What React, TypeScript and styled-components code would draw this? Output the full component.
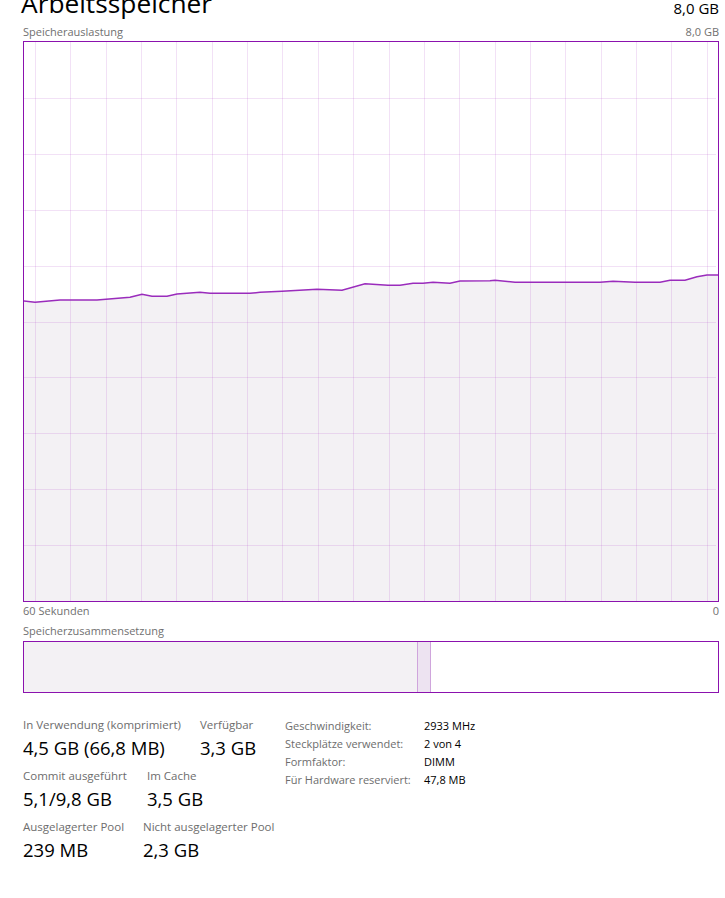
import React from "react";
import styled, { createGlobalStyle } from "styled-components";

const Global = createGlobalStyle`
  html, body { margin: 0; padding: 0; background: #ffffff; }
  body { font-family: "Open Sans", "Noto Sans", sans-serif; overflow: hidden; }
`;

const Page = styled.div`
  width: 725px;
  height: 898px;
  box-sizing: border-box;
  padding: 0 6px 0 23px;
  display: flex;
  flex-direction: column;
  overflow: hidden;
  color: #000;
`;

const HeaderRow = styled.div`
  height: 22px;
  display: flex;
  justify-content: space-between;
  align-items: flex-start;
  overflow: visible;
`;

const Title = styled.div`
  font-size: 26.3px;
  line-height: 26px;
  margin-top: -10px;
  margin-left: -2px;
  height: 32px;
`;

const HeaderValue = styled.div`
  font-size: 15px;
  line-height: 17px;
  margin-top: 0;
`;

const LabelRow = styled.div<{ $h: number }>`
  height: ${(p) => p.$h}px;
  display: flex;
  justify-content: space-between;
  align-items: center;
  font-size: 11px;
  color: #707070;
`;

const ChartBox = styled.div`
  width: 696px;
  height: 561px;
  box-sizing: border-box;
  border: 1px solid #8b12ae;
  background: #ffffff;
`;

const ChartSvg = styled.svg`
  display: block;
  width: 694px;
  height: 559px;
`;

const CompBar = styled.div`
  width: 696px;
  height: 52px;
  box-sizing: border-box;
  border: 1px solid #8b12ae;
  display: flex;
`;

const Segment = styled.div<{ $w?: number; $bg: string; $edge?: boolean }>`
  ${(p) => (p.$w !== undefined ? `width: ${p.$w}px; flex: none;` : "flex: 1;")}
  background: ${(p) => p.$bg};
  box-sizing: border-box;
  ${(p) => (p.$edge ? "border-left: 1px solid #cfa5dc; border-right: 1px solid #cfa5dc;" : "")}
`;

const Stats = styled.div`
  margin-top: 23px;
  display: flex;
`;

const LeftStats = styled.div`
  width: 262px;
  display: flex;
  flex-direction: column;
  gap: 5px;
  padding-top: 1px;
`;

const StatRow = styled.div`
  display: flex;
`;

const Stat = styled.div<{ $w: number }>`
  width: ${(p) => p.$w}px;
  flex: none;
  display: flex;
  flex-direction: column;
`;

const StatLabel = styled.div`
  font-size: 11.5px;
  line-height: 16px;
  color: #6d6d6d;
  white-space: nowrap;
`;

const StatValue = styled.div`
  font-size: 18.5px;
  line-height: 30px;
  color: #000;
  white-space: nowrap;
`;

const InfoTable = styled.div`
  display: grid;
  grid-template-columns: 139px auto;
  grid-auto-rows: 18px;
  align-items: center;
  font-size: 11px;
`;

const InfoLabel = styled.div`
  color: #6d6d6d;
  white-space: nowrap;
`;

const InfoValue = styled.div`
  color: #000;
  white-space: nowrap;
`;

const W = 694;
const H = 559;
const OX = 24;
const OY = 42;

const pts: [number, number][] = [
  [23, 301], [35, 302.3], [60, 300], [97, 300], [130, 297.3], [142, 294.3],
  [152, 296.3], [167, 296.3], [177, 294], [200, 292.3], [210, 293.3], [250, 293.3],
  [260, 292.3], [282, 291.3], [317, 289.3], [342, 290.3], [365, 283.7], [388, 285.3],
  [400, 285.3], [413, 283.3], [423, 283.3], [433, 282.3], [450, 283.3], [460, 281],
  [490, 280.7], [495, 280.3], [515, 282.3], [600, 282.3], [613, 281.3], [635, 282.3],
  [660, 282.3], [670, 280.3], [685, 280.3], [697, 276.7], [707, 275], [719, 275],
];

const Chart: React.FC = () => {
  const local = pts.map(([x, y]) => [x - OX, y - OY] as [number, number]);
  const line = local.map(([x, y]) => `${x.toFixed(1)},${y.toFixed(1)}`).join(" ");
  const area = `${line} ${W},${H} 0,${H}`;
  const vx = Array.from({ length: 20 }, (_, i) => Math.round(35 + i * 35.35) - OX + 0.5);
  const hy = Array.from({ length: 9 }, (_, i) => Math.round(OY + (i + 1) * 55.9) - OY + 0.5);
  return (
    <ChartSvg viewBox={`0 0 ${W} ${H}`}>
      <polygon points={area} fill="#f3f1f4" />
      <g stroke="rgba(175, 80, 200, 0.17)" strokeWidth={1} shapeRendering="crispEdges">
        {vx.map((x) => (
          <line key={`v${x}`} x1={x} y1={0} x2={x} y2={H} />
        ))}
        {hy.map((y) => (
          <line key={`h${y}`} x1={0} y1={y} x2={W - 2} y2={y} />
        ))}
      </g>
      <polyline points={line} fill="none" stroke="#9a2cbc" strokeWidth={1.5} />
    </ChartSvg>
  );
};

const App: React.FC = () => (
  <>
    <Global />
    <Page>
      <HeaderRow>
        <Title>Arbeitsspeicher</Title>
        <HeaderValue>8,0 GB</HeaderValue>
      </HeaderRow>
      <LabelRow $h={19}>
        <span>Speicherauslastung</span>
        <span>8,0 GB</span>
      </LabelRow>
      <ChartBox>
        <Chart />
      </ChartBox>
      <LabelRow $h={17}>
        <span>60 Sekunden</span>
        <span>0</span>
      </LabelRow>
      <LabelRow $h={22}>
        <span>Speicherzusammensetzung</span>
      </LabelRow>
      <CompBar>
        <Segment $w={393} $bg="#f3f1f4" />
        <Segment $w={14} $bg="#ede3f1" $edge />
        <Segment $bg="#ffffff" />
      </CompBar>
      <Stats>
        <LeftStats>
          <StatRow>
            <Stat $w={177}>
              <StatLabel>In Verwendung (komprimiert)</StatLabel>
              <StatValue>4,5 GB (66,8 MB)</StatValue>
            </Stat>
            <Stat $w={80}>
              <StatLabel>Verfügbar</StatLabel>
              <StatValue>3,3 GB</StatValue>
            </Stat>
          </StatRow>
          <StatRow>
            <Stat $w={124}>
              <StatLabel>Commit ausgeführt</StatLabel>
              <StatValue>5,1/9,8 GB</StatValue>
            </Stat>
            <Stat $w={80}>
              <StatLabel>Im Cache</StatLabel>
              <StatValue>3,5 GB</StatValue>
            </Stat>
          </StatRow>
          <StatRow>
            <Stat $w={120}>
              <StatLabel>Ausgelagerter Pool</StatLabel>
              <StatValue>239 MB</StatValue>
            </Stat>
            <Stat $w={140}>
              <StatLabel>Nicht ausgelagerter Pool</StatLabel>
              <StatValue>2,3 GB</StatValue>
            </Stat>
          </StatRow>
        </LeftStats>
        <InfoTable>
          <InfoLabel>Geschwindigkeit:</InfoLabel>
          <InfoValue>2933 MHz</InfoValue>
          <InfoLabel>Steckplätze verwendet:</InfoLabel>
          <InfoValue>2 von 4</InfoValue>
          <InfoLabel>Formfaktor:</InfoLabel>
          <InfoValue>DIMM</InfoValue>
          <InfoLabel>Für Hardware reserviert:</InfoLabel>
          <InfoValue>47,8 MB</InfoValue>
        </InfoTable>
      </Stats>
    </Page>
  </>
);

export default App;
